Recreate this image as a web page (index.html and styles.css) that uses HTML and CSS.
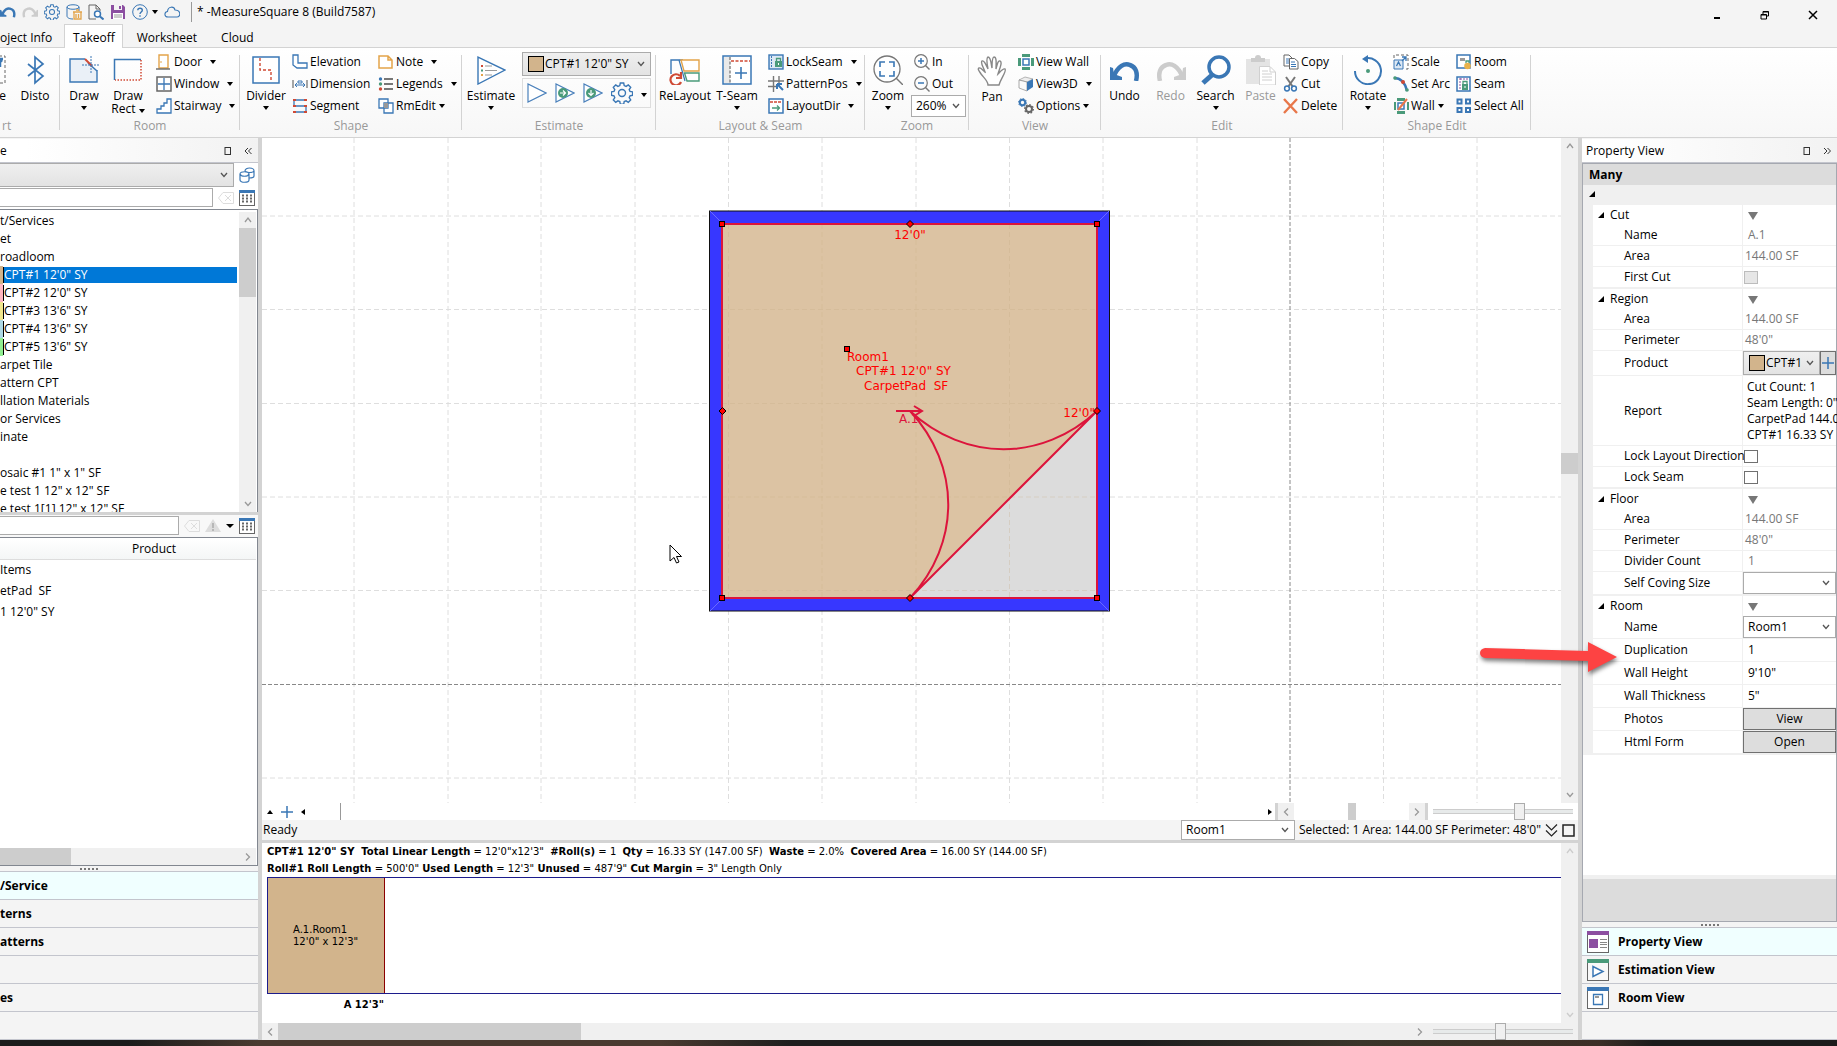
FILE: index.html
```html
<!DOCTYPE html>
<html lang="en">

<head>
  <meta charset="UTF-8">
  <meta name="viewport" content="width=device-width, initial-scale=1.0">
  <title>MeasureSquare 8</title>
  <link rel="stylesheet" href="styles.css">
</head>

<body>
  <!-- shared icons -->
  <svg class="defs" width="0" height="0" aria-hidden="true">
    <symbol id="chev-down" viewBox="0 0 8 8"><path d="M1 2l3 3.5L7 2" fill="none" stroke="currentColor" stroke-width="1.3"/></symbol>
    <symbol id="chev-up" viewBox="0 0 8 8"><path d="M1 6l3-4 3 4" fill="none" stroke="currentColor" stroke-width="1.3"/></symbol>
    <symbol id="chev-left" viewBox="0 0 8 8"><path d="M6 0.5L2.5 4 6 7.5" fill="none" stroke="currentColor" stroke-width="1.3"/></symbol>
    <symbol id="chev-right" viewBox="0 0 8 8"><path d="M2 0.5L5.5 4 2 7.5" fill="none" stroke="currentColor" stroke-width="1.3"/></symbol>
    <symbol id="gear" viewBox="0 0 22 22">
      <path d="M9.3 1h3.4l.5 2.6 1.9.8 2.2-1.5 2.4 2.4-1.5 2.2.8 1.9 2.6.5v3.4l-2.6.5-.8 1.9 1.5 2.2-2.4 2.4-2.2-1.5-1.9.8-.5 2.6H9.3l-.5-2.6-1.9-.8-2.2 1.5-2.4-2.4 1.5-2.2-.8-1.9L.4 13.3V9.9l2.6-.5.8-1.9-1.5-2.2 2.4-2.4 2.2 1.5 1.9-.8z" fill="none" stroke="currentColor" stroke-width="1.4"/>
      <circle cx="11" cy="11" r="3.5" fill="none" stroke="currentColor" stroke-width="1.4"/>
    </symbol>
    <symbol id="grid" viewBox="0 0 16 16">
      <rect x=".5" y=".5" width="15" height="15" fill="#fff" stroke="#666"/>
      <path d="M0 1.5h16" stroke="#3a77b5" stroke-width="3"/>
      <path d="M3 5.5h10M3 8.5h10M3 11.5h10" stroke="#666" stroke-width="2" stroke-dasharray="2 2"/>
    </symbol>
    <symbol id="clear" viewBox="0 0 16 12">
      <path d="M5 .5h10.5v11H5L.5 6z" fill="none" stroke="#ddd"/><path d="M7 3l6 6M13 3l-6 6" stroke="#ddd"/>
    </symbol>
    <symbol id="undo" viewBox="0 0 30 20">
      <path d="M3 17C8 4 15 2 20 4c6 2 8 8 6 16" fill="none" stroke="currentColor" stroke-width="4.5"/>
      <path d="M0 6l3 1 1 6 8 3v3H0z" fill="currentColor"/>
    </symbol>
    <symbol id="pin" viewBox="0 0 8 8"><rect x="1" y=".5" width="5.5" height="7" fill="none" stroke="#333"/></symbol>
    <symbol id="lens" viewBox="0 0 16 16">
      <circle cx="7" cy="7" r="6.3" fill="none" stroke="#777" stroke-width="1.2"/><path d="M11.5 11.5l4 4" stroke="#777" stroke-width="1.4"/>
    </symbol>
    <symbol id="play" viewBox="0 0 20 20"><path d="M1 1v18l18-9z" fill="#fff" stroke="#4a80bb" stroke-width="1.2"/></symbol>
  </svg>

  <header class="titlebar">
    <div class="quick">
      <button class="q-first" aria-label="Undo"><svg class="blue" width="16" height="12"><use href="#undo"/></svg></button>
      <button aria-label="Redo"><svg class="faded flip" width="16" height="12"><use href="#undo"/></svg></button>
      <button aria-label="Settings"><svg class="blue" width="16" height="16"><use href="#gear"/></svg></button>
      <button aria-label="Database"><svg width="16" height="16" viewBox="0 0 16 16"><path d="M1 3v9c0 2 3 3 6 3M1 3c0-3 12-3 12 0s-12 3-12 0M13 3v4" fill="none" stroke="#3a77b5"/><path d="M8 8v7h7V8zM7 8h9M10 10v4M12.5 10v4M10 6h3" fill="none" stroke="#e3a44a" stroke-width="1.3"/></svg></button>
      <button aria-label="Preview"><svg width="16" height="16" viewBox="0 0 16 16"><path d="M8 15H1V1h7l4 4v2M8 1v4h4" fill="none" stroke="#666"/><circle cx="9.5" cy="10" r="3" fill="#fff" stroke="#3a77b5" stroke-width="1.5"/><path d="M12 12.5l3.5 3" stroke="#3a77b5" stroke-width="2"/></svg></button>
      <button aria-label="Save"><svg width="16" height="16" viewBox="0 0 16 16"><path d="M1 1h12l2 2v12H1z" fill="#8c4fa1"/><path d="M4 1h8v5H4z" fill="#f4f4f4"/><path d="M3 9h10v6H3z" fill="#fff"/><path d="M9 2h2v3H9z" fill="#8c4fa1"/><path d="M4 11h8M4 13h8" stroke="#999"/></svg></button>
      <button aria-label="Help"><svg width="16" height="16" viewBox="0 0 16 16"><circle cx="8" cy="8" r="7.3" fill="none" stroke="#3a77b5"/><path d="M5.8 6.3C5.8 3.5 10.3 3.6 10.3 6.2 10.3 8 8 8 8 10M8 11.2v1.5" fill="none" stroke="#3a77b5" stroke-width="1.4"/></svg><i class="caret"></i></button>
      <button aria-label="Cloud"><svg width="16" height="12" viewBox="0 0 16 12"><path d="M4 11C0 11 0 6 3.5 5.5 4 0 10 0 11 4c6 0 6 7 2 7z" fill="none" stroke="#3a77b5" stroke-width="1.1"/></svg></button>
    </div>
    <span class="title">* -MeasureSquare 8 (Build7587)</span>
    <div class="window-buttons">
      <button aria-label="Minimize"><svg width="10" height="10"><path d="M2 8h6" stroke="#000" stroke-width="2"/></svg></button>
      <button aria-label="Restore"><svg width="10" height="10"><path d="M1 4.5h5.5v4.5H1zM3 4V1.5h5.5V6H7M1 5h5.5M3 2h5.5" fill="none" stroke="#000"/></svg></button>
      <button aria-label="Close"><svg width="10" height="10"><path d="M1 1l8 8M9 1L1 9" stroke="#000" stroke-width="1.5"/></svg></button>
    </div>
  </header>

  <nav class="tabs">
    <a href="#" class="tab-cut">oject Info</a>
    <a href="#" class="active">Takeoff</a>
    <a href="#">Worksheet</a>
    <a href="#">Cloud</a>
  </nav>

  <div class="ribbon">
    <section class="group g-import">
      <button class="big cut"><svg width="30" height="30" viewBox="0 0 30 30"><path d="M18 1h11v27H18" fill="none" stroke="#666" stroke-dasharray="3 2"/><path d="M24 4v8M27 4h-8M26 5l-8 8" stroke="#3a77b5" stroke-width="2.5"/></svg><span>e</span></button>
      <button class="big"><svg width="30" height="30" viewBox="0 0 30 30"><path d="M8 9l15 12-8 7V2l8 7L8 21" fill="none" stroke="#3a77b5" stroke-width="1.7"/></svg><span>Disto</span></button>
      <h2>rt</h2>
    </section>

    <section class="group g-room">
      <button class="big"><svg width="30" height="30" viewBox="0 0 30 30"><path d="M16 4H1v23h27V15" fill="#eaf0f7" stroke="#3a77b5" stroke-width="1.4"/><path d="M19 8l9 8" stroke="#3a77b5" stroke-width="1.5"/><path d="M16 4l7 7" stroke="#cf4a35" stroke-width="2"/><path d="M22 1v18M13 10h18" stroke="#3a77b5" stroke-dasharray="2 1"/></svg><span>Draw</span><i class="caret"></i></button>
      <button class="big"><svg width="30" height="30" viewBox="0 0 30 30"><path d="M1.5 25V4.5H28" fill="none" stroke="#3a77b5" stroke-width="1.5"/><path d="M28 5v20H2" fill="none" stroke="#cf4a35" stroke-width="1.5" stroke-dasharray="1.5 1.5"/></svg><span>Draw<br>Rect <i class="caret"></i></span></button>
      <div class="stack pad">
        <button><svg width="16" height="16" viewBox="0 0 16 16"><path d="M3 1h9v13H3z" fill="#fff" stroke="#e3a44a" stroke-width="1.4"/><path d="M0 15h14" stroke="#666" stroke-width="1.4"/><path d="M5 7v2" stroke="#e3a44a"/></svg>Door<i class="caret"></i></button>
        <button><svg width="16" height="16" viewBox="0 0 16 16"><path d="M1 1h14v14H1z" fill="#fff" stroke="#666" stroke-width="1.5"/><path d="M8 2v12M2 8h12" stroke="#3a77b5" stroke-width="1.3"/></svg>Window<i class="caret"></i></button>
        <button><svg width="16" height="16" viewBox="0 0 16 16"><path d="M1 15v-4h4V8h3V5h3V1h4v14z" fill="#fff" stroke="#3a77b5" stroke-width="1.3"/></svg>Stairway<i class="caret"></i></button>
      </div>
      <h2>Room</h2>
    </section>

    <section class="group g-shape">
      <button class="big"><svg width="30" height="30" viewBox="0 0 30 30"><rect x="2" y="2" width="26" height="26" fill="#fff" stroke="#3a77b5" stroke-width="1.5"/><path d="M9 3v12h11v12" fill="none" stroke="#cf4a35" stroke-width="1.4" stroke-dasharray="3 2"/></svg><span>Divider</span><i class="caret"></i></button>
      <div class="stack">
        <button><svg width="16" height="16" viewBox="0 0 16 16"><path d="M1 1h5v8h9v5H5L1 11z" fill="#fff" stroke="#3a77b5" stroke-width="1.3"/></svg>Elevation</button>
        <button><svg width="16" height="16" viewBox="0 0 16 16"><path d="M1 4v8M15 4v8" stroke="#888" stroke-width="1.5"/><path d="M3 9h10M5 7L3 9l2 2M11 7l2 2-2 2M6 5h4v2H6z" fill="none" stroke="#3a77b5"/></svg>Dimension</button>
        <button><svg width="16" height="16" viewBox="0 0 16 16"><path d="M14 2H2v6h12v6H2" fill="none" stroke="#3a77b5" stroke-width="1.3"/><path d="M1 1h3v2H1zM12 1h3v2h-3zM1 7h3v2H1zM12 7h3v2h-3zM1 13h3v2H1zM12 13h3v2h-3z" fill="#cf4a35"/></svg>Segment</button>
      </div>
      <div class="stack">
        <button><svg width="16" height="16" viewBox="0 0 16 16"><path d="M1 2h9l4 4v8H1zM10 2v4h4" fill="#fff" stroke="#e3a44a" stroke-width="1.5"/></svg>Note<i class="caret"></i></button>
        <button><svg width="16" height="16" viewBox="0 0 16 16"><path d="M6 3h9M6 8h9M6 13h9" stroke="#777" stroke-width="2"/><circle cx="2.5" cy="3" r="1.7" fill="#3a77b5"/><circle cx="2.5" cy="8" r="1.7" fill="#4a9a7a"/><circle cx="2.5" cy="13" r="1.7" fill="#cf4a35"/></svg>Legends<i class="caret"></i></button>
        <button class="tight"><svg width="16" height="16" viewBox="0 0 16 16"><path d="M1 1h9v9H1zM6 5h9v10H6z" fill="#fff" stroke="#3a77b5" stroke-width="1.3"/><path d="M6 5h4v5H6z" fill="#999"/></svg>RmEdit<i class="caret"></i></button>
      </div>
      <h2>Shape</h2>
    </section>

    <section class="group g-estimate">
      <button class="big"><svg width="30" height="30" viewBox="0 0 30 30"><path d="M2 2v27l27-14z" fill="#fff" stroke="#3a77b5" stroke-width="1.4"/><path d="M9 11h7M9 15.5h12M9 20h7" stroke="#999"/><path d="M5 11h2" stroke="#cf4a35" stroke-width="2"/><path d="M5 15.5h2" stroke="#4a9a7a" stroke-width="2"/><path d="M5 20h2" stroke="#e3a44a" stroke-width="2"/></svg><span>Estimate</span><i class="caret"></i></button>
      <div class="estimate-tools">
        <div class="combo gray">
          <select aria-label="Product"><option>CPT#1 12'0" SY</option></select>
          <span class="swatch"></span>
          <svg class="arrow"><use href="#chev-down"/></svg>
        </div>
        <div class="play-row">
          <button aria-label="Run"><svg width="20" height="20"><use href="#play"/></svg></button>
          <button aria-label="Run next"><svg width="20" height="20"><use href="#play"/><circle cx="8" cy="10" r="5" fill="#4a9a7a"/><path d="M5 10h5M8 7.5l2.5 2.5L8 12.5" fill="none" stroke="#fff" stroke-width="1.2"/></svg></button>
          <button aria-label="Run down"><svg width="20" height="20"><use href="#play"/><circle cx="8" cy="10" r="5" fill="#4a9a7a"/><path d="M8 7v5M5.5 10L8 12.5l2.5-2.5" fill="none" stroke="#fff" stroke-width="1.2"/></svg></button>
          <button aria-label="Options"><svg class="blue" width="22" height="22"><use href="#gear"/></svg></button>
          <button aria-label="More"><i class="caret"></i></button>
        </div>
      </div>
      <h2>Estimate</h2>
    </section>

    <section class="group g-layout">
      <button class="big"><svg width="32" height="30" viewBox="0 0 32 30"><path d="M14 5H2v14" fill="none" stroke="#3a77b5" stroke-width="1.4"/><path d="M10 5l6 21" stroke="#3a77b5" stroke-width="1.2"/><path d="M12 5h18v11H15z" fill="#fff" stroke="#e3a44a" stroke-width="1.4"/><path d="M15.5 18H30v8H18z" fill="#fff" stroke="#4a9a7a" stroke-width="1.4"/><path d="M11 21a5.5 5.5 0 1 0 1 6M12 17v6H7" fill="none" stroke="#cf4a35" stroke-width="2.2"/></svg><span>ReLayout</span></button>
      <button class="big"><svg width="30" height="30" viewBox="0 0 30 30"><rect x="1" y="1" width="28" height="28" fill="#fff" stroke="#3a77b5" stroke-width="1.5"/><path d="M2 2h6v26H2z" fill="#e9e9e9"/><path d="M8 2v26" stroke="#888" stroke-width="1.5" stroke-dasharray="3 1.5"/><path d="M9 6h19" stroke="#cf4a35" stroke-width="1.5" stroke-dasharray="3 1.5"/><path d="M13 18h12M19 12v12" stroke="#3a77b5" stroke-width="1.6"/></svg><span>T-Seam</span><i class="caret"></i></button>
      <div class="stack pad">
        <button><svg width="16" height="16" viewBox="0 0 16 16"><rect x="1" y="1" width="14" height="14" fill="#dce8f4" stroke="#3a77b5" stroke-width="1.4"/><path d="M3.5 2v12" stroke="#3a77b5" stroke-dasharray="2 1"/><path d="M7 7h7v6H7z" fill="#4a9a7a"/><path d="M8.5 7V4.500h4V7" fill="none" stroke="#4a9a7a" stroke-width="1.3"/><path d="M10.500 9v2" stroke="#fff"/></svg>LockSeam<i class="caret"></i></button>
        <button><svg width="16" height="16" viewBox="0 0 16 16"><path d="M5.5 0v16M11 0v10M0 5h16M0 10.5h9" stroke="#777" stroke-width="1.4"/><path d="M9 8l6 6M9 8v5M9 8h5" stroke="#3a77b5" stroke-width="2"/></svg>PatternPos<i class="caret"></i></button>
        <button><svg width="16" height="16" viewBox="0 0 16 16"><rect x="1" y="1" width="14" height="14" fill="#fff" stroke="#3a77b5" stroke-width="1.5"/><path d="M2 4h12" stroke="#cf4a35" stroke-width="1.5" stroke-dasharray="3 1"/><path d="M4 10h7M9 7.5l2.5 2.5L9 12.5" fill="none" stroke="#4a9a7a" stroke-width="1.3"/></svg>LayoutDir<i class="caret"></i></button>
      </div>
      <h2>Layout &amp; Seam</h2>
    </section>

    <section class="group g-zoom">
      <button class="big"><svg width="30" height="30" viewBox="0 0 30 30"><circle cx="14" cy="14" r="13" fill="#fff" stroke="#777" stroke-width="1.3"/><path d="M23 23l7 7" stroke="#777" stroke-width="1.4"/><path d="M7 12V7h5M16 7h5v5M21 16v5h-5M12 21H7v-5" fill="none" stroke="#3a77b5" stroke-width="1.6"/></svg><span>Zoom</span><i class="caret"></i></button>
      <div class="stack">
        <button class="inset"><svg width="16" height="16"><use href="#lens"/><path d="M4 7h6M7 4v6" stroke="#3a77b5" stroke-width="1.5"/></svg>In</button>
        <button class="inset"><svg width="16" height="16"><use href="#lens"/><path d="M4 7h6" stroke="#3a77b5" stroke-width="1.5"/></svg>Out</button>
        <div class="combo zoom-level">
          <select aria-label="Zoom level"><option>260%</option></select>
          <svg class="arrow"><use href="#chev-down"/></svg>
        </div>
      </div>
      <h2>Zoom</h2>
    </section>

    <section class="group g-view">
      <button class="big"><svg width="30" height="31" viewBox="0 0 30 31"><path d="M11 30c0-4-4-7-7-11-1-2-4-5-2-6 2-1 4 3 6 4C7 13 3 8 5 6c2-1 4 4 6 8C10 9 9 3 11 2c3 0 3 7 4 11 0-4 0-11 2-11 3 0 2 7 2 12 1-4 2-9 4-8 3 1-1 9-2 13 2-2 5-6 7-5 2 2-4 9-6 16z" fill="#fff" stroke="#888" stroke-width="1.4"/></svg><span>Pan</span></button>
      <div class="stack">
        <button class="inset"><svg width="16" height="16" viewBox="0 0 16 16"><path d="M4 0h8v3H4zM4 13h8v3H4zM0 4h3v8H0zM13 4h3v8h-3z" fill="#4a9a7a"/><rect x="5" y="5" width="6" height="6" fill="#fff" stroke="#3a77b5" stroke-width="1.5"/></svg>View Wall</button>
        <button class="inset"><svg width="16" height="16" viewBox="0 0 16 16"><path d="M1 4l6-3 8 2-6 3z" fill="#eee" stroke="#999" stroke-width=".7"/><path d="M1 4l8 2v9l-8-3z" fill="#fafafa" stroke="#888" stroke-width=".7"/><path d="M9 6l6-3v8l-6 4z" fill="#3a77b5"/></svg>View3D<i class="caret"></i></button>
        <button class="inset tight"><svg width="16" height="16" viewBox="0 0 16 16"><circle cx="4.5" cy="4.5" r="2.7" fill="none" stroke="#3a77b5" stroke-width="2"/><circle cx="4.5" cy="4.5" r="4" fill="none" stroke="#3a77b5" stroke-dasharray="1.5 1.6"/><circle cx="11" cy="11" r="3" fill="none" stroke="#666" stroke-width="2"/><circle cx="11" cy="11" r="4.4" fill="none" stroke="#666" stroke-width="1.2" stroke-dasharray="1.7 1.7"/></svg>Options<i class="caret"></i></button>
      </div>
      <h2>View</h2>
    </section>

    <section class="group g-edit">
      <button class="big"><svg class="blue" width="30" height="30" viewBox="0 0 30 30"><use href="#undo" y="6" width="30" height="20"/></svg><span>Undo</span></button>
      <button class="big" disabled><svg class="faded flip" width="30" height="30" viewBox="0 0 30 30"><use href="#undo" y="6" width="30" height="20"/></svg><span>Redo</span></button>
      <button class="big"><svg width="30" height="30" viewBox="0 0 30 30"><circle cx="18" cy="12" r="10" fill="#fff" stroke="#3a77b5" stroke-width="3.5"/><path d="M11 20l-9 8" stroke="#3a77b5" stroke-width="5"/></svg><span>Search</span><i class="caret"></i></button>
      <button class="big" disabled><svg width="30" height="30" viewBox="0 0 30 30"><path d="M0 4h24v25H0z" fill="#e4e4e4"/><path d="M5 3h4a3 3 0 0 1 6 0h4v4H5z" fill="#ccc"/><path d="M13.5 11.5H24l5.5 5.5v13h-16z" fill="#fff" stroke="#d0d0d0"/><path d="M24 12v5h5M16 16h6M16 19h10M16 22h10M16 25h10" fill="none" stroke="#d0d0d0"/></svg><span>Paste</span></button>
      <div class="stack">
        <button><svg width="16" height="16" viewBox="0 0 16 16"><path d="M6 12H1V1h5l3 3" fill="#fff" stroke="#666"/><path d="M3 5h3M3 7h3M3 9h3" stroke="#3a77b5"/><path d="M6.5 4.5h5l3.5 3V15H6.5z" fill="#fff" stroke="#666"/><path d="M8 8h4M8 10.5h5M8 12.5h5" stroke="#3a77b5"/></svg>Copy</button>
        <button><svg width="16" height="16" viewBox="0 0 16 16"><path d="M3 1l7 10M12 1L5 11" stroke="#777" stroke-width="2"/><circle cx="4" cy="12.5" r="2.4" fill="none" stroke="#3a77b5" stroke-width="1.5"/><circle cx="11" cy="12.5" r="2.4" fill="none" stroke="#3a77b5" stroke-width="1.5"/></svg>Cut</button>
        <button><svg width="16" height="16" viewBox="0 0 16 16"><path d="M1 1l13 14M14 1L1 15" stroke="#e8774a" stroke-width="2.4"/></svg>Delete</button>
      </div>
      <h2>Edit</h2>
    </section>

    <section class="group g-shape-edit">
      <button class="big"><svg width="30" height="30" viewBox="0 0 30 30"><path d="M12 3.5A13 13 0 1 1 2 16" fill="none" stroke="#3a77b5" stroke-width="2"/><path d="M15 0v8l-6-4z" fill="#3a77b5"/><circle cx="15" cy="16" r="2" fill="#4a9a7a"/></svg><span>Rotate</span><i class="caret"></i></button>
      <div class="stack">
        <button><svg width="16" height="16" viewBox="0 0 16 16"><path d="M1 4V1h14v14h-4" fill="none" stroke="#666" stroke-dasharray="3 2"/><path d="M1 6h9v9H1z" fill="#dce8f4" stroke="#3a77b5"/><path d="M3.5 12l2-4 2 4M9 7l4-4M9 3h4v4" fill="none" stroke="#3a77b5" stroke-width="1.3"/></svg>Scale</button>
        <button><svg width="16" height="16" viewBox="0 0 16 16"><path d="M1 2c7 0 11 4 13 13" fill="none" stroke="#3a77b5" stroke-width="2.4"/><circle cx="2" cy="2" r="1.8" fill="#4a9a7a"/><circle cx="10" cy="6" r="2" fill="#cf4a35"/><circle cx="14" cy="14" r="1.8" fill="#4a9a7a"/></svg>Set Arc</button>
        <button class="tight"><svg width="16" height="16" viewBox="0 0 16 16"><path d="M4 0h8v3H4zM4 13h8v3H4zM1 4h2v8H1zM14 4h2v8h-2z" fill="#4a9a7a"/><rect x="5" y="5" width="6" height="6" fill="#fff" stroke="#3a77b5" stroke-width="1.5"/><path d="M5 12l9-11" stroke="#e8774a" stroke-width="2"/></svg>Wall<i class="caret"></i></button>
      </div>
      <div class="stack">
        <button><svg width="16" height="16" viewBox="0 0 16 16"><path d="M1 1h13v13H1z" fill="#fff" stroke="#3a77b5" stroke-width="1.5"/><path d="M4 4h5v3H4z" fill="#999"/><path d="M10 9V7h3v2" fill="none" stroke="#4a9a7a" stroke-width="1.3"/><circle cx="11.5" cy="12" r="3.3" fill="#e9b24a"/></svg>Room</button>
        <button><svg width="16" height="16" viewBox="0 0 16 16"><path d="M1 1h13v14H1z" fill="#fff" stroke="#3a77b5" stroke-width="1.5"/><path d="M4 2v12M4 3h9" fill="none" stroke="#8c4fa1" stroke-dasharray="2 1"/><path d="M6 8h6v6H6z" fill="#4a9a7a"/><path d="M7 8V5.5h4V8" fill="none" stroke="#4a9a7a" stroke-width="1.3"/><path d="M9 10v2" stroke="#fff"/></svg>Seam</button>
        <button><svg width="16" height="16" viewBox="0 0 16 16"><path d="M1.5 1.5h4v4h-4zM10 1.5h4v4h-4zM1.5 10h4v4h-4zM10 10h4v4h-4z" fill="#fff" stroke="#3a77b5" stroke-width="2"/></svg>Select All</button>
      </div>
      <h2>Shape Edit</h2>
    </section>
  </div>

  <main class="workspace">
    <aside class="side left">
      <div class="side-title"><span>e</span><svg width="8" height="8"><use href="#pin"/></svg><svg width="8" height="8"><path d="M4 1L1 4l3 3M7.5 1l-3 3 3 3" fill="none" stroke="#333"/></svg></div>
      <div class="side-row">
        <div class="combo gray no-left">
          <select aria-label="Library"><option></option></select>
          <svg class="arrow"><use href="#chev-down"/></svg>
        </div>
        <button aria-label="Databases"><svg width="16" height="16" viewBox="0 0 16 16"><path d="M6 4c0-4 9-4 9 0v5c0 2-3 2-5 2M6 4c1 2 8 2 9 0" fill="none" stroke="#3a77b5" stroke-width="1.2"/><path d="M1 7c0-3 9-3 9 0v6c0 3-9 3-9 0zM1 7c1 3 8 3 9 0" fill="#fff" stroke="#3a77b5" stroke-width="1.2"/></svg></button>
      </div>
      <div class="side-row search">
        <input type="text" aria-label="Search products">
        <button aria-label="Clear"><svg width="16" height="12"><use href="#clear"/></svg></button>
        <button aria-label="Columns"><svg width="16" height="16"><use href="#grid"/></svg></button>
      </div>
      <div class="tree">
        <ul>
          <li>t/Services</li>
          <li>et</li>
          <li>roadloom</li>
          <li class="item tan selected"><span>CPT#1 12'0" SY</span></li>
          <li class="item pink"><span>CPT#2 12'0" SY</span></li>
          <li class="item yellow"><span>CPT#3 13'6" SY</span></li>
          <li class="item sky"><span>CPT#4 13'6" SY</span></li>
          <li class="item lime"><span>CPT#5 13'6" SY</span></li>
          <li>arpet Tile</li>
          <li>attern CPT</li>
          <li>llation Materials</li>
          <li>or Services</li>
          <li>inate</li>
          <li></li>
          <li>osaic #1 1" x 1" SF</li>
          <li>e test 1 12" x 12" SF</li>
          <li>e test 1[1] 12" x 12" SF</li>
        </ul>
        <div class="vscroll">
          <svg><use href="#chev-up"/></svg><div class="thumb tree-thumb"></div><svg><use href="#chev-down"/></svg>
        </div>
      </div>
      <div class="side-row search second">
        <input type="text" aria-label="Search items">
        <button aria-label="Clear"><svg width="16" height="12"><use href="#clear"/></svg></button>
        <button aria-label="Warnings"><svg width="16" height="14" viewBox="0 0 16 14"><path d="M8 0l8 13H0z" fill="#ddd"/><path d="M8 4v5M8 10v2" stroke="#aaa" stroke-width="1.5"/></svg></button>
        <button aria-label="More"><i class="caret wide"></i></button>
        <button aria-label="Columns"><svg width="16" height="16"><use href="#grid"/></svg></button>
      </div>
      <div class="items">
        <table>
          <thead><tr><th>Product</th></tr></thead>
          <tbody>
            <tr><td>Items</td></tr>
            <tr><td>etPad&nbsp; SF</td></tr>
            <tr><td>1 12'0" SY</td></tr>
          </tbody>
        </table>
        <div class="hscroll"><div class="thumb items-thumb"></div><svg><use href="#chev-right"/></svg></div>
      </div>
      <div class="grip"></div>
      <nav class="views">
        <a href="#" class="active">/Service</a>
        <a href="#">terns</a>
        <a href="#">atterns</a>
        <a href="#" aria-label="Other"></a>
        <a href="#">es</a>
        <span></span>
      </nav>
    </aside>

    <div class="center">
      <div class="plan-area">
        <svg class="plan">
          <g class="gridlines">
            <path d="M92 0v900M186 0v900M279 0v900M373 0v900M466.5 0v900M560 0v900M654 0v900M747.5 0v900M841 0v900M935 0v900M1121.5 0v900M1215 0v900"/>
            <path d="M0 78h2000M0 171.5h2000M0 265.5h2000M0 359h2000M0 452.5h2000M0 640h2000"/>
          </g>
          <path class="axis" d="M1028 0v900M0 546.5h2000"/>
          <!-- room outline, carpet area and the cut corner -->
          <g transform="translate(447 72)">
            <rect x=".5" y="1" width="400" height="400" fill="#3737ff" stroke="#111"/>
            <path d="M1 1l13 13M400 1l-13 13M1 401l13-13M400 401l-13-13" stroke="#6a6aff"/>
            <rect x="13" y="14" width="375" height="374" fill="#dcc3a3"/>
            <path d="M388 201v187H201z" fill="#dcdcdc"/>
            <path class="inner-grid" d="M19.5 14v374M113 14v374M207 14v374M300.5 14v374M13 99.5h375M13 193.5h375M13 287h375M13 380.5h375"/>
            <rect class="cut-line" x="13" y="14" width="375" height="374"/>
            <path class="cut-line" d="M388 201L201 388M201 201C256 252 333 252 388 201M201 201C252 256 252 333 201 388"/>
            <path class="cut-line" d="M187 201h26M205 196l8 5-8 5"/>
            <g class="handles">
              <rect x="10.5" y="11.5" width="5" height="5"/><rect x="385.5" y="11.5" width="5" height="5"/>
              <rect x="10.5" y="385.5" width="5" height="5"/><rect x="385.5" y="385.5" width="5" height="5"/>
              <rect x="135.5" y="136.5" width="5" height="5"/>
              <path d="M201 10.5l3.5 3.5-3.5 3.5-3.5-3.5zM201 384.5l3.5 3.5-3.5 3.5-3.5-3.5zM13.5 197.5l3.5 3.5-3.5 3.5-3.5-3.5zM388 197.5l3.5 3.5-3.5 3.5-3.5-3.5z"/>
            </g>
            <g class="plan-text">
              <text x="201" y="29" text-anchor="middle">12'0"</text>
              <text x="138" y="151">Room1</text>
              <text x="147" y="165">CPT#1 12'0" SY</text>
              <text x="155" y="180" xml:space="preserve">CarpetPad  SF</text>
              <text x="386" y="207" text-anchor="end">12'0"</text>
              <text x="190" y="213" class="piece">A.1</text>
            </g>
          </g>
          <path d="M408 407v16l4-3.5 2.5 5.5 2.500-1-2.500-5.500h5z" fill="#fff" stroke="#000"/>
        </svg>
        <div class="vscroll">
          <svg><use href="#chev-up"/></svg><div class="thumb plan-thumb"></div><svg><use href="#chev-down"/></svg>
        </div>
      </div>

      <div class="pages">
        <button aria-label="Up"><i class="tri up"></i></button>
        <button aria-label="Add page"><svg width="12" height="12"><path d="M6 0v12M0 6h12" stroke="#3a77b5" stroke-width="1.5"/></svg></button>
        <button aria-label="Previous"><i class="tri back"></i></button>
        <span class="page-mark"></span>
        <button class="push" aria-label="Next"><i class="tri next"></i></button>
        <div class="hscroll framed"><svg><use href="#chev-left"/></svg><div class="track"><div class="thumb"></div></div><svg><use href="#chev-right"/></svg></div>
        <input type="range" min="0" max="100" value="63" aria-label="Plan zoom">
      </div>

      <div class="status">
        <span>Ready</span>
        <div class="combo room-pick">
          <select aria-label="Room"><option>Room1</option></select>
          <svg class="arrow"><use href="#chev-down"/></svg>
        </div>
        <span>Selected: 1 Area: 144.00 SF Perimeter: 48'0"</span>
        <button aria-label="Collapse"><svg width="13" height="13"><path d="M1 0.5l5.5 5.5L12 0.5M1 6.5l5.5 5.5L12 6.5" fill="none" stroke="#222" stroke-width="1.2"/></svg></button>
        <button aria-label="Maximize"><svg width="13" height="13"><rect x="1" y="1" width="11" height="11" fill="none" stroke="#222" stroke-width="1.5"/></svg></button>
      </div>

      <div class="report">
        <div class="report-body">
          <p><b>CPT#1 12'0" SY&nbsp; Total Linear Length</b> = 12'0"x12'3"&nbsp; <b>#Roll(s)</b> = 1&nbsp; <b>Qty</b> = 16.33 SY (147.00 SF)&nbsp; <b>Waste</b> = 2.0%&nbsp; <b>Covered Area</b> = 16.00 SY (144.00 SF)</p>
          <p><b>Roll#1 Roll Length</b> = 500'0" <b>Used Length</b> = 12'3" <b>Unused</b> = 487'9" <b>Cut Margin</b> = 3" Length Only</p>
          <div class="roll"><div class="roll-cut">A.1.Room1<br>12'0" x 12'3"</div></div>
          <div class="roll-mark">A 12'3"</div>
        </div>
        <div class="vscroll dim">
          <svg><use href="#chev-up"/></svg><div></div><svg><use href="#chev-down"/></svg>
        </div>
      </div>
      <div class="report-scroll">
        <div class="hscroll"><svg><use href="#chev-left"/></svg><div class="thumb"></div><svg><use href="#chev-right"/></svg></div>
        <input type="range" min="0" max="100" value="48" aria-label="Roll zoom">
      </div>
    </div>

    <aside class="side right">
      <div class="side-title"><span>Property View</span><svg width="8" height="8"><use href="#pin"/></svg><svg width="8" height="8"><path d="M1 1l3 3-3 3M4.5 1l3 3-3 3" fill="none" stroke="#333"/></svg></div>
      <div class="props">
        <h3>Many</h3>
        <div class="props-top"><i class="open"></i></div>
        <div class="props-list">
          <div class="prop head"><span><i class="open"></i>Cut</span><span><i class="filter"></i></span></div>
          <div class="prop"><span>Name</span><output class="in">A.1</output></div>
          <div class="prop"><span>Area</span><output>144.00 SF</output></div>
          <div class="prop last"><label for="first-cut">First Cut</label><span><input type="checkbox" id="first-cut" disabled></span></div>

          <div class="prop head"><span><i class="open"></i>Region</span><span><i class="filter"></i></span></div>
          <div class="prop"><span>Area</span><output>144.00 SF</output></div>
          <div class="prop"><span>Perimeter</span><output>48'0"</output></div>
          <div class="prop product"><label for="product">Product</label>
            <span>
              <span class="combo gray">
                <select id="product"><option>CPT#1</option></select>
                <span class="swatch"></span>
                <svg class="arrow"><use href="#chev-down"/></svg>
              </span>
              <button class="plus" aria-label="Add product"><svg width="12" height="12"><path d="M6 0v12M0 6h12" stroke="#3a77b5" stroke-width="1.5"/></svg></button>
            </span>
          </div>
          <div class="prop tall"><span>Report</span><span class="lines">Cut Count: 1<br>Seam Length: 0"<br>CarpetPad 144.0<br>CPT#1 16.33 SY</span></div>
          <div class="prop"><label for="lock-dir">Lock Layout Direction</label><span><input type="checkbox" id="lock-dir"></span></div>
          <div class="prop last"><label for="lock-seam">Lock Seam</label><span><input type="checkbox" id="lock-seam"></span></div>

          <div class="prop head"><span><i class="open"></i>Floor</span><span><i class="filter"></i></span></div>
          <div class="prop"><span>Area</span><output>144.00 SF</output></div>
          <div class="prop"><span>Perimeter</span><output>48'0"</output></div>
          <div class="prop"><span>Divider Count</span><output class="in">1</output></div>
          <div class="prop last wide"><label for="coving">Self Coving Size</label>
            <span class="combo"><select id="coving"><option></option></select><svg class="arrow"><use href="#chev-down"/></svg></span></div>

          <div class="prop head"><span><i class="open"></i>Room</span><span><i class="filter"></i></span></div>
          <div class="prop wide"><label for="room-name">Name</label>
            <span class="combo"><select id="room-name"><option>Room1</option></select><svg class="arrow"><use href="#chev-down"/></svg></span></div>
          <div class="prop wide"><label for="dup">Duplication</label><input type="text" id="dup" value="1"></div>
          <div class="prop wide"><label for="height">Wall Height</label><input type="text" id="height" value="9'10&quot;"></div>
          <div class="prop wide"><label for="thick">Wall Thickness</label><input type="text" id="thick" value="5&quot;"></div>
          <div class="prop wide"><span>Photos</span><button>View</button></div>
          <div class="prop wide last"><span>Html Form</span><button>Open</button></div>

          <svg class="callout" width="150" height="44" viewBox="0 0 150 44"><path d="M10 8Q5 9 5 13t5 5l103 3v11l29-15L113 2v9z" fill="#fd4343"/></svg>
        </div>
        <div class="props-note"></div>
      </div>
      <div class="grip"></div>
      <nav class="views icons">
        <a href="#" class="active"><svg width="22" height="22"><rect x=".5" y=".5" width="21" height="21" fill="#fff" stroke="#666"/><path d="M0 2h22" stroke="#8c4fa1" stroke-width="4"/><path d="M2 8h9v9H2z" fill="#8c4fa1"/><path d="M13 8.5h7M13 11.5h7M13 13.5h7M13 16.5h7" stroke="#888"/></svg>Property View</a>
        <a href="#"><svg width="22" height="22"><rect x=".5" y=".5" width="21" height="21" fill="#f8f8f8" stroke="#666"/><path d="M0 2h22" stroke="#4a9a7a" stroke-width="4"/><path d="M6 7.5v10l10-5z" fill="#fff" stroke="#3a77b5" stroke-width="1.5"/></svg>Estimation View</a>
        <a href="#"><svg width="22" height="22"><rect x=".5" y=".5" width="21" height="21" fill="#fff" stroke="#666"/><path d="M0 2h22" stroke="#3a77b5" stroke-width="4"/><path d="M6.5 7.5h9v10h-9z" fill="#fff" stroke="#3a77b5" stroke-width="1.3"/><path d="M8 10h4" stroke="#999" stroke-width="2"/></svg>Room View</a>
        <span></span>
      </nav>
    </aside>
  </main>

  <footer class="taskbar"></footer>
</body>

</html>
```

FILE: styles.css
```css
:root {
  --blue: #3a77b5;
  --line: #c3c5cd;
  --gap: #d3d3d3;
  --soft: #f0f0f0;
}

* {
  box-sizing: border-box;
}

body {
  background: #f4f4f4;
  color: #000;
  display: flex;
  flex-direction: column;
  font-family: "Open Sans", "Noto Sans", sans-serif;
  font-size: 12px;
  height: 100vh;
  line-height: 16px;
  margin: 0;
  overflow: hidden;
}

button,
select,
input {
  border: 0;
  border-radius: 0;
  color: inherit;
  font: inherit;
  margin: 0;
  padding: 0;
}

button {
  background: none;
  white-space: nowrap;
}

a {
  color: inherit;
  text-decoration: none;
}

svg {
  display: block;
  flex: none;
}

.defs {
  position: absolute;
}

.blue {
  color: var(--blue);
}

.faded {
  color: #ccc;
}

.flip {
  transform: scaleX(-1);
}

.caret {
  border: 3px solid transparent;
  border-bottom: 0;
  border-top: 4px solid #000;
  display: inline-block;
  flex: none;
}

.caret.wide {
  border-left-width: 4px;
  border-right-width: 4px;
}

/* title bar */
.titlebar {
  align-items: center;
  display: flex;
  height: 24px;
}

.quick {
  align-items: center;
  border-right: 1px solid #999;
  display: flex;
  gap: 6px;
  height: 20px;
  padding-right: 11px;
}

.quick button {
  align-items: center;
  display: flex;
  gap: 4px;
}

.title {
  padding-left: 5px;
}

.window-buttons {
  display: flex;
  gap: 38px;
  margin-left: auto;
  padding: 6px 19px 0 0;
}

/* tabs */
.tabs {
  border-bottom: 1px solid var(--gap);
  display: flex;
  height: 24px;
}

.tabs a {
  line-height: 16px;
  padding: 6px 12px 0;
}

.tabs .tab-cut {
  padding: 6px 12px 0 0;
}

.tabs .active {
  background: #fff;
  border: 1px solid var(--gap);
  border-bottom: 0;
  height: 24px;
  margin-right: 2px;
  padding: 5px 7px 0 8px;
}

/* ribbon */
.ribbon {
  background: linear-gradient(#fff, #f7f7f7);
  border-bottom: 1px solid var(--gap);
  display: flex;
  height: 90px;
}

.group {
  display: grid;
  grid-template-rows: 69px 18px;
  position: relative;
}

.group::after {
  background: var(--gap);
  content: "";
  height: 75px;
  position: absolute;
  right: 0;
  top: 7px;
  width: 1px;
}

.group h2 {
  color: #999;
  font-size: 12px;
  font-weight: normal;
  grid-column: 1 / -1;
  line-height: 18px;
  margin: 0;
  text-align: center;
  white-space: nowrap;
}

.g-import {
  grid-template-columns: 10px 50px;
}

.group.g-import h2 {
  padding-left: 2px;
  text-align: left;
}

.g-room {
  grid-template-columns: 48px 40px 92px;
}

.g-shape {
  grid-template-columns: 52px 86px 84px;
}

.g-estimate {
  grid-template-columns: 58px 136px;
}

.g-layout {
  grid-template-columns: 58px 46px 105px;
}

.g-zoom {
  grid-template-columns: 46px 58px;
}

.g-view {
  grid-template-columns: 46px 86px;
}

.g-edit {
  grid-template-columns: 47px 45px 45px 45px 60px;
}

.g-shape-edit {
  grid-template-columns: 50px 63px 75px;
}

.big {
  align-items: center;
  display: flex;
  flex-direction: column;
  line-height: 13px;
  padding-top: 7px;
}

.big span {
  margin-top: 4px;
}

.big > .caret {
  margin-top: 4px;
}

.big:disabled {
  color: #999;
}

.big.cut {
  align-items: flex-end;
  overflow: hidden;
  padding-right: 4px;
}

.stack {
  display: flex;
  flex-direction: column;
  padding-top: 3px;
}

.stack.pad {
  padding-left: 8px;
}

.stack button {
  align-items: center;
  display: flex;
  gap: 2px;
  height: 22px;
}

.stack .caret {
  margin-left: 6px;
}

.stack .tight .caret {
  margin-left: 1px;
}

.stack .inset {
  padding-left: 3px;
}

/* drop-downs */
.combo {
  background: #fff;
  border: 1px solid #ababab;
  display: grid;
  grid-template-columns: 1fr 18px;
}

.combo select {
  appearance: none;
  background: none;
  grid-area: 1 / 1 / 2 / 3;
  min-width: 0;
  padding: 0 0 0 4px;
  width: 100%;
}

.combo.gray {
  background: linear-gradient(#efefef, #e3e3e3);
}

.combo .arrow {
  align-self: center;
  color: #555;
  grid-area: 1 / 2;
  height: 8px;
  justify-self: center;
  pointer-events: none;
  width: 8px;
}

.combo .swatch {
  align-self: center;
  background: #d2b48c;
  border: 1px solid #000;
  grid-area: 1 / 1;
  height: 16px;
  margin-left: 5px;
  pointer-events: none;
  width: 16px;
}

.combo:has(.swatch) select {
  padding-left: 22px;
}

.estimate-tools {
  padding: 4px 5px 0 2px;
}

.estimate-tools .combo {
  height: 24px;
}

.play-row {
  align-items: center;
  border: 1px solid #ddd;
  display: flex;
  gap: 8px;
  height: 30px;
  margin-top: 2px;
  padding-left: 4px;
}

.zoom-level {
  height: 22px;
  margin-right: 3px;
}

/* workspace */
.workspace {
  background: var(--gap);
  display: grid;
  flex: 1;
  gap: 4px;
  grid-template-columns: 258px minmax(0, 1fr) 255px;
  min-height: 0;
}

.side {
  background: #f4f4f4;
  display: flex;
  flex-direction: column;
  min-height: 0;
  padding-top: 1px;
}

.side-title {
  align-items: center;
  background: linear-gradient(90deg, #fff 10%, #f2f2f2);
  border-bottom: 1px solid var(--line);
  display: flex;
  flex: none;
  gap: 12px;
  height: 24px;
  padding-right: 6px;
}

.side-title span {
  flex: 1;
}

.right .side-title {
  padding-left: 4px;
}

.side-row {
  align-items: flex-start;
  background: #fff;
  display: flex;
  flex: none;
  gap: 5px;
  height: 25px;
  padding-right: 3px;
}

.side-row button {
  align-items: center;
  display: flex;
  height: 24px;
}

.side-row .combo {
  flex: 1;
  height: 24px;
}

.side-row .no-left {
  border-left: 0;
}

.side-row.search {
  height: 21px;
}

.search input {
  background: #fff;
  border: 1px solid #ababab;
  border-left: 0;
  flex: 1;
  height: 19px;
  min-width: 0;
}

.search button {
  height: 19px;
}

.side-row.second {
  background: #f8f8f8;
  border-top: 3px solid var(--gap);
  gap: 5px;
  height: 25px;
  padding-top: 1px;
}

.tree {
  background: #fff;
  border: 1px solid #828790;
  border-bottom: 0;
  border-left: 0;
  display: grid;
  flex: none;
  grid-template-columns: 1fr 17px;
  height: 303px;
  overflow: hidden;
  padding: 2px 1px 0 0;
}

.tree ul {
  height: 300px;
  list-style: none;
  margin: 0;
  overflow: hidden;
  padding: 0 2px 0 0;
}

.tree li {
  height: 18px;
  line-height: 18px;
}

.tree .item {
  border-left: 3px solid #d2b48c;
  display: flex;
  padding: 1px 0;
}

.item span {
  border-left: 1px solid #000;
  flex: 1;
  line-height: 16px;
}

.tree .pink {
  border-left-color: #ffb6c1;
}

.tree .yellow {
  border-left-color: #f0e68c;
}

.tree .sky {
  border-left-color: #add8e6;
}

.tree .lime {
  border-left-color: #90ee90;
}

.item.selected span {
  background: #0078d7;
  color: #fff;
}

.vscroll {
  align-items: center;
  background: var(--soft);
  color: #999;
  display: flex;
  flex-direction: column;
  justify-content: space-between;
}

.vscroll svg,
.hscroll svg {
  height: 8px;
  margin: 4px;
  width: 8px;
}

.thumb {
  background: #cdcdcd;
}

.vscroll .thumb {
  width: 100%;
}

.tree-thumb {
  height: 69px;
  margin-bottom: auto;
}

.plan-thumb {
  height: 21px;
  margin-bottom: 14px;
}

.dim svg {
  color: #ccc;
}

.hscroll {
  align-items: center;
  background: var(--soft);
  color: #999;
  display: flex;
  height: 17px;
}

.hscroll svg:last-child {
  margin-left: auto;
}

.hscroll .thumb {
  height: 17px;
}

.items {
  background: #fff;
  border: 1px solid #828790;
  border-left: 0;
  display: flex;
  flex: 1;
  flex-direction: column;
  justify-content: space-between;
  min-height: 0;
  padding: 1px 1px 0 0;
}

.items table {
  border-collapse: collapse;
  width: 100%;
}

.items th {
  background: linear-gradient(#fff, #f4f6f6);
  border-bottom: 1px solid #ddd;
  font-weight: normal;
  height: 20px;
  line-height: 18px;
  padding: 0 0 0 52px;
}

.items td {
  height: 21px;
  line-height: 20px;
  padding: 0 0 1px;
}

.items-thumb {
  width: 71px;
}

.grip {
  background: radial-gradient(circle, #777 1px, transparent 1px) center / 4px 4px repeat-x;
  flex: none;
  height: 5px;
  margin: 0 auto;
  width: 20px;
}

.left .grip {
  margin-left: 79px;
}

.views {
  border-top: 1px solid var(--line);
  font-weight: bold;
}

.views a,
.views > span {
  align-items: center;
  border-bottom: 1px solid var(--line);
  display: flex;
  height: 28px;
}

.views .active {
  background: #f0ffff;
}

.icons a {
  gap: 9px;
  padding-left: 5px;
}

/* center column */
.center {
  background: #fff;
  display: flex;
  flex-direction: column;
  min-height: 0;
}

.plan-area {
  display: grid;
  flex: 1;
  grid-template-columns: 1fr 17px;
  min-height: 0;
}

.plan {
  height: 100%;
  min-height: 0;
  overflow: hidden;
  width: 100%;
}

.gridlines path,
.inner-grid {
  fill: none;
  stroke: #dedede;
  stroke-dasharray: 5 3;
}

.inner-grid {
  stroke: #c8ad88;
  stroke-opacity: 0.3;
}

.axis {
  stroke: #888;
  stroke-dasharray: 4 2;
}

.cut-line {
  fill: none;
  stroke: #dc143c;
  stroke-width: 2;
}

.handles {
  fill: #f00;
  stroke: #000;
}

.plan-text {
  fill: #f00;
  font-family: "DejaVu Sans", sans-serif;
  font-size: 12px;
}

.plan-text .piece {
  fill: #dc143c;
}

.pages {
  align-items: center;
  display: flex;
  height: 17px;
  padding: 0 5px;
}

.pages button {
  display: flex;
  margin-right: 8px;
}

.tri {
  border: 3px solid transparent;
}

.tri.up {
  border-bottom: 4px solid #000;
  border-top: 0;
}

.tri.back {
  border-left: 0;
  border-right: 4px solid #000;
}

.tri.next {
  border-left: 4px solid #000;
  border-right: 0;
}

.page-mark {
  border-left: 1px solid #999;
  height: 17px;
  margin-left: 27px;
}

.pages .push {
  margin-left: auto;
  margin-right: 3px;
}

.framed {
  border: 3px solid var(--gap);
  border-bottom: 0;
  border-top: 0;
  width: 153px;
}

.framed svg:last-child {
  margin-left: 4px;
}

.framed .track {
  background: #fff;
  flex: 1;
}

.framed .thumb {
  margin: 0 auto;
  width: 8px;
}

input[type="range"] {
  appearance: none;
  background: linear-gradient(#ccc, #ccc) 0 6px / 100% 1px no-repeat, linear-gradient(#ccc, #ccc) 0 10px / 100% 1px no-repeat, linear-gradient(#e7eaea, #e7eaea) 0 7px / 100% 3px no-repeat;
  height: 17px;
  margin-left: 5px;
  width: 140px;
}

input[type="range"]::-webkit-slider-thumb {
  appearance: none;
  background: var(--soft);
  border: 1px solid #acacac;
  height: 17px;
  width: 11px;
}

.status {
  align-items: center;
  background: #f4f4f4;
  display: flex;
  gap: 4px;
  height: 20px;
  line-height: 18px;
  padding: 0 3px 0 1px;
}

.room-pick {
  height: 20px;
  margin-left: auto;
  width: 114px;
}

.report {
  border-top: 3px solid var(--gap);
  display: grid;
  font-family: "DejaVu Sans", sans-serif;
  font-size: 10px;
  grid-template-columns: minmax(0, 1fr) 17px;
  height: 183px;
}

.report-body {
  padding-left: 5px;
}

.report p {
  line-height: 17px;
  margin: 0;
  overflow: hidden;
  white-space: nowrap;
}

.roll {
  border: 1px solid #1c1c8c;
  border-right: 0;
  display: flex;
  height: 117px;
}

.roll-cut {
  background: #d2b48c;
  border-right: 1px solid #8b0000;
  line-height: 12px;
  padding: 46px 0 0 25px;
  white-space: nowrap;
  width: 117px;
}

.roll-mark {
  font-weight: bold;
  line-height: 22px;
  text-align: right;
  width: 117px;
}

.report-scroll {
  background: var(--soft);
  display: flex;
  padding-right: 5px;
}

.report-scroll .hscroll {
  flex: 1;
}

.report-scroll .thumb {
  width: 26%;
}

/* property view */
.props {
  background: #fff;
  border: 1px solid #a5a8b0;
  display: flex;
  flex: 1;
  flex-direction: column;
  min-height: 0;
}

.props h3 {
  background: #dcdcdc;
  font-size: 12px;
  line-height: 21px;
  margin: 0;
  padding-left: 6px;
}

.props-top {
  background: var(--soft);
  height: 20px;
  padding: 6px;
}

.open {
  border-bottom: 6px solid #000;
  border-left: 6px solid transparent;
  display: block;
  height: 0;
  width: 0;
}

.props-list {
  border-left: 10px solid var(--soft);
  position: relative;
}

.prop {
  border-bottom: 1px solid var(--soft);
  display: grid;
  grid-template-columns: 150px minmax(0, 1fr);
  height: 21px;
  white-space: nowrap;
}

.prop > :first-child {
  align-items: center;
  border-right: 1px solid var(--soft);
  display: flex;
  padding-left: 31px;
}

.prop > :last-child {
  min-width: 0;
}

.prop.head {
  border-bottom: 0;
  height: 20px;
}

.prop.head > :first-child {
  gap: 6px;
  padding-left: 5px;
}

.prop.last {
  border-bottom-width: 2px;
  height: 22px;
}

.prop.wide {
  height: 23px;
}

.prop.wide.last {
  height: 24px;
}

.prop.product {
  height: 25px;
}

.prop.tall {
  height: 70px;
}

.prop output {
  color: #777;
  padding: 2px 0 0 2px;
}

.prop .in {
  padding-left: 5px;
}

.prop .lines {
  padding: 3px 0 0 4px;
}

.prop input[type="text"] {
  background: #fff;
  padding-left: 5px;
}

.prop > button,
.plus {
  background: #ddd;
  border: 1px solid #707070;
}

.filter {
  border: 5px solid transparent;
  border-bottom: 0;
  border-top: 8px solid #777;
  display: block;
  margin: 7px 0 0 5px;
  width: 0;
}

.prop input[type="checkbox"] {
  appearance: none;
  background: #fff;
  border: 1px solid #707070;
  display: block;
  height: 13px;
  margin: 4px 0 0 1px;
  width: 14px;
}

.prop input[type="checkbox"]:disabled {
  background: #e6e6e6;
  border-color: #bcbcbc;
}

.product > :last-child {
  display: grid;
  grid-template-columns: 1fr 16px;
}

.plus {
  align-items: center;
  display: flex;
  justify-content: center;
}

/* red pointer laid over the plan and the property list */
.callout {
  filter: drop-shadow(1px 3px 2px rgba(0, 0, 0, 0.5));
  left: -118px;
  position: absolute;
  top: 435px;
  z-index: 2;
}

.props-note {
  background: #dcdcdc;
  border-top: 4px solid var(--soft);
  height: 46px;
  margin-top: auto;
}

.taskbar {
  background: linear-gradient(90deg, #1b1b1b 0, #1b1b1b 7%, #4a3a30 14%, #4a3a30 36%, #1e1e1e 43%, #1e1e1e 62%, #3a352a 74%, #3c2e26 87%, #1b1b1b 90%);
  height: 6px;
}
```
